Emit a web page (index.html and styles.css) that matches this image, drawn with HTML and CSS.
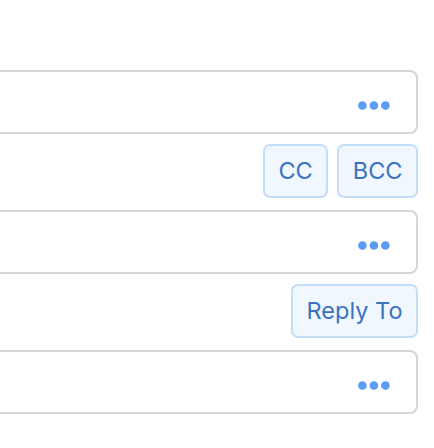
FILE: index.html
```html
<!DOCTYPE html>
<html>
<head>
<meta charset="utf-8">
<link rel="stylesheet" href="styles.css">
</head>
<body>
<div class="stack">
  <div class="field">
    <svg class="more" viewBox="0 0 32 9" width="32" height="9"><circle cx="4.4" cy="4.5" r="4.3"/><circle cx="15.9" cy="4.5" r="4.3"/><circle cx="27.4" cy="4.5" r="4.3"/></svg>
  </div>
  <div class="actions">
    <button class="chip">CC</button>
    <button class="chip">BCC</button>
  </div>
  <div class="field">
    <svg class="more" viewBox="0 0 32 9" width="32" height="9"><circle cx="4.4" cy="4.5" r="4.3"/><circle cx="15.9" cy="4.5" r="4.3"/><circle cx="27.4" cy="4.5" r="4.3"/></svg>
  </div>
  <div class="actions">
    <button class="chip">Reply To</button>
  </div>
  <div class="field">
    <svg class="more" viewBox="0 0 32 9" width="32" height="9"><circle cx="4.4" cy="4.5" r="4.3"/><circle cx="15.9" cy="4.5" r="4.3"/><circle cx="27.4" cy="4.5" r="4.3"/></svg>
  </div>
</div>
</body>
</html>
```

FILE: styles.css
```css
html, body {
  margin: 0;
  padding: 0;
  background: #ffffff;
}

body {
  font-family: "Inter", "Liberation Sans", Arial, sans-serif;
  overflow: hidden;
}

.stack {
  margin-left: -30px;
  width: 448px;
  padding-top: 70px;
  display: flex;
  flex-direction: column;
}

.field {
  box-sizing: border-box;
  height: 64px;
  border: 2px solid #d6d6d6;
  border-radius: 8px;
  display: flex;
  justify-content: flex-end;
  align-items: flex-start;
  padding: 28.5px 26px 0 0;
}

.more {
  display: block;
  fill: #5b9bf4;
}

.actions {
  display: flex;
  justify-content: flex-end;
  gap: 9px;
  margin: 10px 0 12px;
}

.chip {
  box-sizing: border-box;
  height: 54px;
  margin: 0;
  padding: 0 13.5px;
  border: 2px solid #c3def8;
  border-radius: 7px;
  background: #f1f7ff;
  color: #3a72c3;
  font-family: "Inter", "Liberation Sans", Arial, sans-serif;
  font-size: 23.5px;
  line-height: 1;
  display: flex;
  align-items: center;
}
```
